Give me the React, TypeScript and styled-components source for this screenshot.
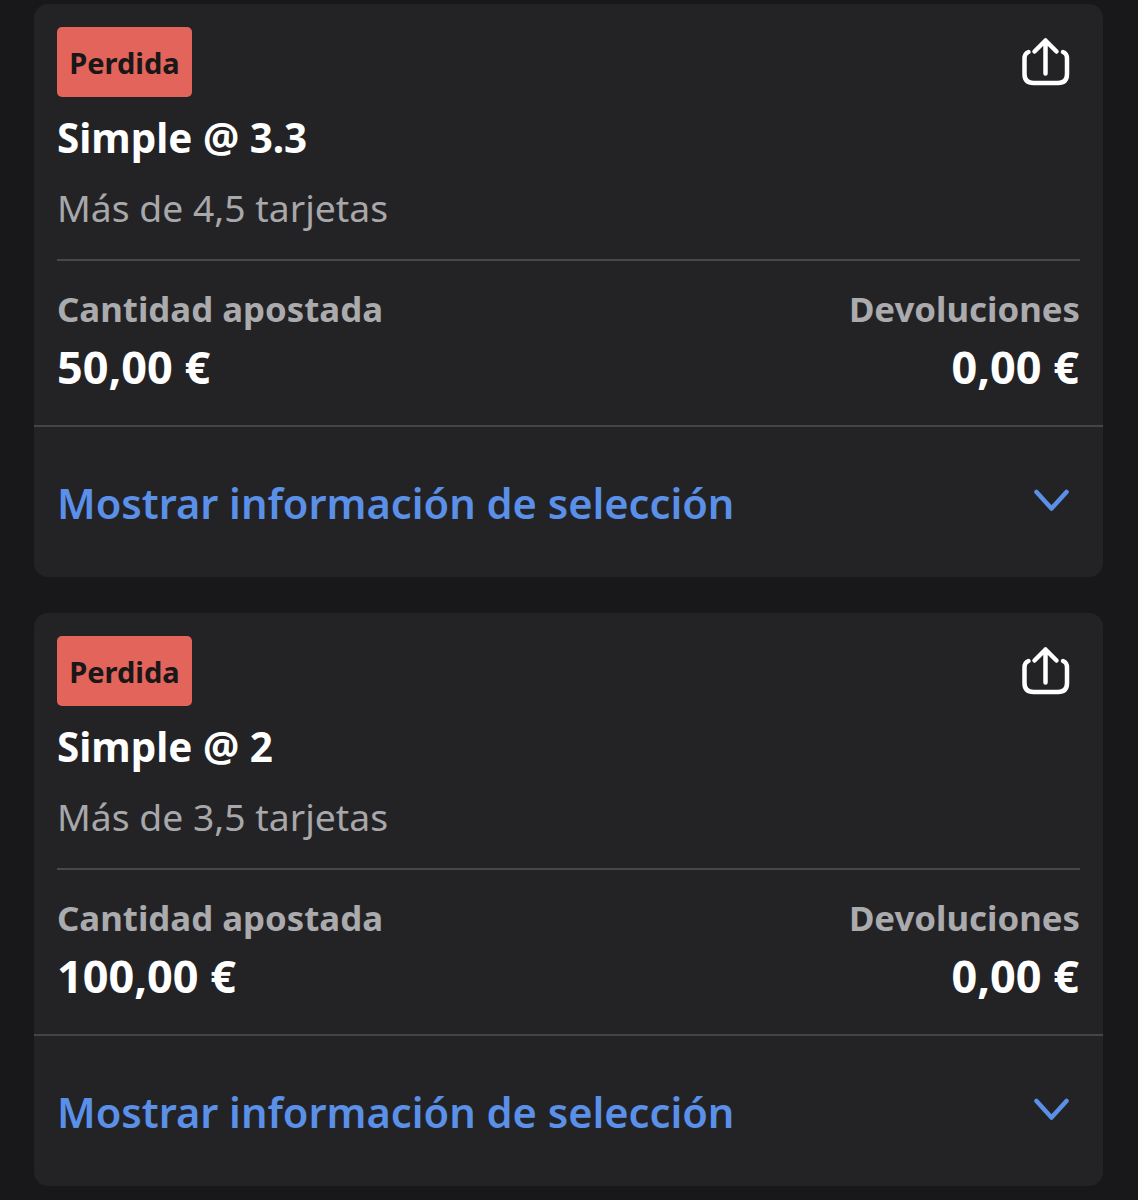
import React from "react";
import styled, { createGlobalStyle } from "styled-components";

const Global = createGlobalStyle`
  html, body { margin: 0; padding: 0; background: #18181a; }
  body { font-family: "Noto Sans", "Open Sans", sans-serif; }
`;

const Page = styled.div`
  height: 1200px;
  overflow: hidden;
  padding: 4px 35px 0 34px;
  display: flex;
  flex-direction: column;
  gap: 36px;
  box-sizing: border-box;
`;

const Card = styled.section`
  background: #232326;
  border-radius: 14px;
  height: 573px;
  flex: none;
  box-sizing: border-box;
  display: flex;
  flex-direction: column;
`;

const Top = styled.div`
  padding: 23px 23px 0;
  height: 423px;
  box-sizing: border-box;
  border-bottom: 2px solid #454548;
  flex: none;
`;

const HeadRow = styled.div`
  display: flex;
  justify-content: space-between;
  align-items: flex-start;
`;

const Badge = styled.div`
  width: 135px;
  height: 70px;
  border-radius: 5px;
  background: #e2645b;
  color: #1a1718;
  font-size: 29px;
  font-weight: 700;
  display: flex;
  align-items: center;
  justify-content: center;
`;

const ShareBtn = styled.div`
  width: 48px;
  height: 50px;
  margin: 10px 10px 0 0;
  color: #fff;
`;

const Title = styled.div`
  color: #fff;
  font-size: 40.4px;
  line-height: 52px;
  font-weight: 700;
  margin-top: 15px;
`;

const Sub = styled.div`
  color: #a8a8ab;
  font-size: 37.3px;
  line-height: 50px;
  margin-top: 19px;
`;

const Rule = styled.div`
  height: 2px;
  background: #48484b;
  margin-top: 26px;
`;

const Stats = styled.div`
  display: flex;
  justify-content: space-between;
  margin-top: 26px;
`;

const Stat = styled.div<{ $right?: boolean }>`
  display: flex;
  flex-direction: column;
  text-align: ${(p) => (p.$right ? "right" : "left")};
`;

const Label = styled.div`
  color: #ababae;
  font-size: 34.8px;
  line-height: 44px;
  font-weight: 700;
`;

const Amount = styled.div`
  color: #fff;
  font-size: 45px;
  line-height: 60px;
  font-weight: 700;
  margin: 6px 1px 0 0;
`;

const Toggle = styled.div`
  flex: 1;
  display: flex;
  justify-content: space-between;
  padding: 50px 33px 0 23px;
  align-items: flex-start;
`;

const LinkText = styled.div`
  color: #5a90e8;
  font-size: 41.6px;
  line-height: 52px;
  font-weight: 600;
`;

const Chevron = styled.div`
  width: 36px;
  height: 24px;
  margin-top: 12px;
  color: #5a90e8;
`;

const ShareIcon = () => (
  <svg width="48" height="50" viewBox="0 0 48 50" fill="none" stroke="currentColor" strokeWidth="4.5" strokeLinecap="round" strokeLinejoin="round">
    <path d="M6.5 15 C3.8 16 2.5 18 2.5 21.5 V37 C2.5 43 5.5 46 11.5 46 H36 C42 46 45 43 45 37 V21.5 C45 18 43.7 16 41 15" />
    <path d="M23.5 36.5 V3.5 M12.5 14.5 L23.5 3.5 L34.5 14.5" />
  </svg>
);

const ChevronIcon = () => (
  <svg width="36" height="24" viewBox="0 0 36 24" fill="none" stroke="currentColor" strokeWidth="4.5" strokeLinecap="round" strokeLinejoin="round">
    <path d="M2.5 3 L17.5 19.5 L32.5 3" />
  </svg>
);

const bets = [
  { title: "Simple @ 3.3", sub: "Más de 4,5 tarjetas", amount: "50,00 €" },
  { title: "Simple @ 2", sub: "Más de 3,5 tarjetas", amount: "100,00 €" },
];

export default function App() {
  return (
    <>
      <Global />
      <Page>
        {bets.map((b) => (
          <Card key={b.title}>
            <Top>
              <HeadRow>
                <Badge>Perdida</Badge>
                <ShareBtn>
                  <ShareIcon />
                </ShareBtn>
              </HeadRow>
              <Title>{b.title}</Title>
              <Sub>{b.sub}</Sub>
              <Rule />
              <Stats>
                <Stat>
                  <Label>Cantidad apostada</Label>
                  <Amount>{b.amount}</Amount>
                </Stat>
                <Stat $right>
                  <Label>Devoluciones</Label>
                  <Amount>0,00 €</Amount>
                </Stat>
              </Stats>
            </Top>
            <Toggle>
              <LinkText>Mostrar información de selección</LinkText>
              <Chevron>
                <ChevronIcon />
              </Chevron>
            </Toggle>
          </Card>
        ))}
      </Page>
    </>
  );
}
